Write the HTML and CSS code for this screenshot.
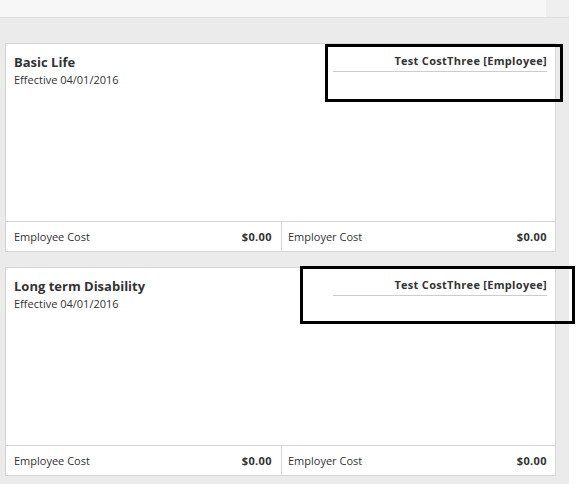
FILE: index.html
```html
<!DOCTYPE html>
<html>
<head>
<meta charset="utf-8">
<link rel="stylesheet" href="styles.css">
</head>
<body>
<div class="page">
  <div class="topbar"><div class="topbar-main"></div></div>
  <div class="cards">
    <div class="card">
      <div class="card-body">
        <div class="card-info">
          <div class="card-title">Basic Life</div>
          <div class="card-date">Effective 04/01/2016</div>
        </div>
        <div class="card-person">Test CostThree [Employee]</div>
      </div>
      <div class="card-foot">
        <div class="cost"><span>Employee Cost</span><b>$0.00</b></div>
        <div class="cost cost-right"><span>Employer Cost</span><b>$0.00</b></div>
      </div>
      <div class="mark mark-one"></div>
    </div>
    <div class="card">
      <div class="card-body">
        <div class="card-info">
          <div class="card-title">Long term Disability</div>
          <div class="card-date">Effective 04/01/2016</div>
        </div>
        <div class="card-person">Test CostThree [Employee]</div>
      </div>
      <div class="card-foot">
        <div class="cost"><span>Employee Cost</span><b>$0.00</b></div>
        <div class="cost cost-right"><span>Employer Cost</span><b>$0.00</b></div>
      </div>
      <div class="mark mark-two"></div>
    </div>
  </div>
</div>
</body>
</html>
```
FILE: styles.css
```css
html, body {
  margin: 0;
  padding: 0;
  background: #ffffff;
}
body {
  font-family: "Open Sans", "DejaVu Sans", sans-serif;
  font-size: 11px;
  color: #333333;
}
.page {
  width: 569px;
  height: 484px;
  background: #ebebeb;
}
.topbar {
  height: 17px;
  background: #efefef;
  border-bottom: 1px solid #dddddd;
  display: flex;
}
.topbar-main {
  width: 546px;
  background: #f7f7f7;
}
.cards {
  padding: 25px 0 0 5px;
  display: flex;
  flex-direction: column;
  gap: 15px;
}
.card {
  position: relative;
  width: 549px;
  background: #ffffff;
  border: 1px solid #d6d6d6;
}
.card-body {
  height: 177px;
  display: flex;
  justify-content: space-between;
  align-items: flex-start;
  padding: 0 8px;
}
.card-info {
  padding-top: 9px;
}
.card-title {
  font-size: 13px;
  font-weight: bold;
  line-height: 18px;
}
.card-date {
  margin-top: 2px;
  line-height: 14px;
}
.card-person {
  margin-top: 8px;
  width: 214px;
  text-align: right;
  font-weight: bold;
  letter-spacing: 0.3px;
  line-height: 17px;
  padding-bottom: 2px;
  border-bottom: 1px solid #cccccc;
}
.card-foot {
  display: flex;
  border-top: 1px solid #d6d6d6;
  height: 29px;
}
.cost {
  flex: 0 0 275px;
  display: flex;
  justify-content: space-between;
  align-items: center;
  padding: 0 9px 0 8px;
  box-sizing: border-box;
}
.cost-right {
  flex: 1;
  border-left: 1px solid #d6d6d6;
  padding: 0 8px 0 6px;
}
.cost b {
  font-weight: bold;
  letter-spacing: 0.4px;
}
.mark {
  position: absolute;
  border: 3px solid #000000;
  box-sizing: border-box;
}
.mark-one {
  left: 319px;
  top: 0px;
  width: 238px;
  height: 58px;
}
.mark-two {
  left: 294px;
  top: -2px;
  width: 275px;
  height: 58px;
}
```
